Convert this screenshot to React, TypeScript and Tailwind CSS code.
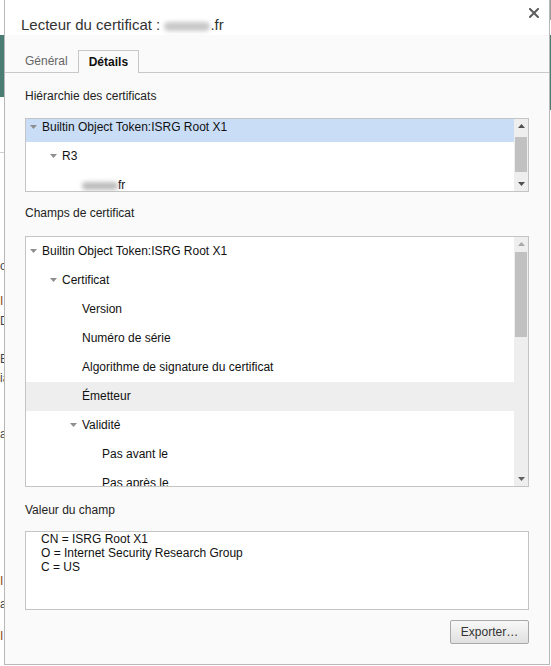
import React from 'react';

type Row = {
  label: React.ReactNode;
  level: number;
  expander?: boolean;
  selected?: boolean;
  hover?: boolean;
};

const hierarchy: Row[] = [
  { label: 'Builtin Object Token:ISRG Root X1', level: 0, expander: true, selected: true },
  { label: 'R3', level: 1, expander: true },
  {
    label: (
      <>
        <span className="inline-block w-[36px] h-[8px] align-middle rounded-full bg-[#bdbdbd] blur-[2px]" />
        <span>fr</span>
      </>
    ),
    level: 2,
  },
];

const fields: Row[] = [
  { label: 'Builtin Object Token:ISRG Root X1', level: 0, expander: true },
  { label: 'Certificat', level: 1, expander: true },
  { label: 'Version', level: 2 },
  { label: 'Numéro de série', level: 2 },
  { label: 'Algorithme de signature du certificat', level: 2 },
  { label: 'Émetteur', level: 2, hover: true },
  { label: 'Validité', level: 2, expander: true },
  { label: 'Pas avant le', level: 3 },
  { label: 'Pas après le', level: 3 },
];

const Expander = () => (
  <svg width="7" height="4" viewBox="0 0 7 4" className="shrink-0">
    <polygon points="0,0 7,0 3.5,4" fill="#8e8e8e" />
  </svg>
);

const Arrow = ({ up, color }: { up?: boolean; color: string }) => (
  <svg width="7" height="4" viewBox="0 0 7 4">
    <polygon points={up ? '0,4 7,4 3.5,0' : '0,0 7,0 3.5,4'} fill={color} />
  </svg>
);

const TreeRow = ({ row }: { row: Row }) => {
  // indentation: 20px per level, expander sits 4px in, text 16px in
  const pad = ['pl-[4px]', 'pl-[24px]', 'pl-[44px]', 'pl-[64px]'][row.level];
  const textPad = ['pl-[16px]', 'pl-[36px]', 'pl-[56px]', 'pl-[76px]'][row.level];
  const bg = row.selected ? 'bg-[#c9ddf7]' : row.hover ? 'bg-[#eeeeee]' : '';
  return (
    <div className={`h-[29px] shrink-0 flex items-center pb-[1px] ${row.expander ? pad : textPad} ${bg}`}>
      {row.expander && <Expander />}
      <span className={`${row.expander ? 'ml-[5px]' : ''} text-[12px] leading-[14px] text-[#111] whitespace-nowrap`}>
        {row.label}
      </span>
    </div>
  );
};

const Scrollbar = ({
  thumbTop,
  thumbHeight,
  upColor,
  downColor,
}: {
  thumbTop: string;
  thumbHeight: string;
  upColor: string;
  downColor: string;
}) => (
  <div className="w-[14px] shrink-0 bg-[#eeeeee] flex flex-col">
    <div className="h-[14px] flex items-center justify-center">
      <Arrow up color={upColor} />
    </div>
    <div className="flex-1 px-[1px]">
      <div className={`${thumbTop} ${thumbHeight} w-[12px] bg-[#c1c1c1]`} />
    </div>
    <div className="h-[14px] flex items-center justify-center">
      <Arrow color={downColor} />
    </div>
  </div>
);

const Label = ({ children, className }: { children: React.ReactNode; className: string }) => (
  <div className={`${className} text-[12px] leading-[14px] text-[#222]`}>{children}</div>
);

const Dialog = () => (
  <div className="w-[546px] h-[665px] shrink-0 flex flex-col border-x border-b border-[#b8b8b8] bg-[#fafafa]">
    {/* title bar */}
    <div className="h-[35px] shrink-0 bg-white flex justify-between">
      <div className="pl-[16px] pt-[16px] text-[15px] leading-[18px] text-[#333] whitespace-nowrap">
        Lecteur du certificat :{' '}
        <span className="inline-block w-[46px] h-[9px] align-middle rounded-full bg-[#c8c8c8] blur-[2px]" />
        .fr
      </div>
      <button className="mt-[8px] mr-[10px] w-[10px] h-[10px]">
        <svg width="10" height="10" viewBox="0 0 10 10">
          <path d="M1 1 L9 9 M9 1 L1 9" stroke="#5c5c5c" strokeWidth="2" strokeLinecap="square" />
        </svg>
      </button>
    </div>

    {/* tabs */}
    <div className="shrink-0 pt-[15px] pl-[10px] flex items-end border-b border-[#c8c8c8]">
      <div className="h-[22px] px-[10px] flex items-center text-[12px] text-[#666]">Général</div>
      <div className="h-[23px] mb-[-1px] px-[10px] flex items-center border-t border-x border-[#c8c8c8] bg-[#fafafa] text-[12px] font-bold text-[#111]">
        Détails
      </div>
    </div>

    <div className="flex-1 flex flex-col px-5">
      <Label className="mt-[16px]">Hiérarchie des certificats</Label>
      <div className="mt-[15px] h-[74px] shrink-0 flex border border-[#c4c4c4] bg-white">
        <div className="flex-1 overflow-hidden">
          <div className="mt-[-6px] flex flex-col">
            {hierarchy.map((r, i) => (
              <TreeRow key={i} row={r} />
            ))}
          </div>
        </div>
        <Scrollbar thumbTop="mt-[4px]" thumbHeight="h-[35px]" upColor="#505050" downColor="#505050" />
      </div>

      <Label className="mt-[14px]">Champs de certificat</Label>
      <div className="mt-[16px] h-[251px] shrink-0 flex border border-[#c4c4c4] bg-white">
        <div className="flex-1 overflow-hidden flex flex-col">
          {fields.map((r, i) => (
            <TreeRow key={i} row={r} />
          ))}
        </div>
        <Scrollbar thumbTop="mt-[1px]" thumbHeight="h-[85px]" upColor="#a8a8a8" downColor="#606060" />
      </div>

      <Label className="mt-[16px]">Valeur du champ</Label>
      <div className="mt-[14px] h-[79px] shrink-0 border border-[#c4c4c4] bg-white pl-[15px] text-[12px] leading-[14px] text-[#111]">
        <div>CN = ISRG Root X1</div>
        <div>O = Internet Security Research Group</div>
        <div>C = US</div>
      </div>

      <div className="mt-[10px] flex justify-end">
        <button className="w-[79px] h-[24px] border border-[#a8a8a8] rounded-[2px] bg-linear-to-b from-[#f8f8f8] to-[#e0e0e0] text-[12px] text-[#333]">
          Exporter…
        </button>
      </div>
    </div>
  </div>
);

// slice of the page visible behind the dialog on the left
const LeftStrip = () => (
  <div className="w-[4px] shrink-0 overflow-hidden bg-white flex flex-col text-[12px] leading-[14px] text-[#444]">
    <div className="mt-[35px] h-[62px] bg-[#4b7c73]" />
    <div className="mt-[55px] h-px w-[4px] bg-[#cfcfcf]" />
    <div className="mt-[106px]">o</div>
    <div className="mt-[21px] text-[#8a4b12]">I</div>
    <div className="mt-[6px]">D</div>
    <div className="mt-[24px]">E</div>
    <div className="mt-[5px]">ia</div>
    <div className="mt-[42px]">a</div>
    <div className="mt-[133px] text-[#8a4b12]">I</div>
    <div className="mt-[9px]">a</div>
    <div className="mt-[18px] text-[#8a4b12]">I</div>
  </div>
);

const RightStrip = () => (
  <div className="w-[1px] shrink-0 bg-white flex flex-col">
    <div className="h-[20px] bg-[#9a9a9a]" />
    <div className="mt-[15px] h-[75px] bg-[#4b7c73]" />
  </div>
);

export default function App() {
  return (
    <div className="w-[551px] h-[666px] overflow-hidden flex bg-white font-['Liberation_Sans',Arial,sans-serif]">
      <LeftStrip />
      <Dialog />
      <RightStrip />
    </div>
  );
}
